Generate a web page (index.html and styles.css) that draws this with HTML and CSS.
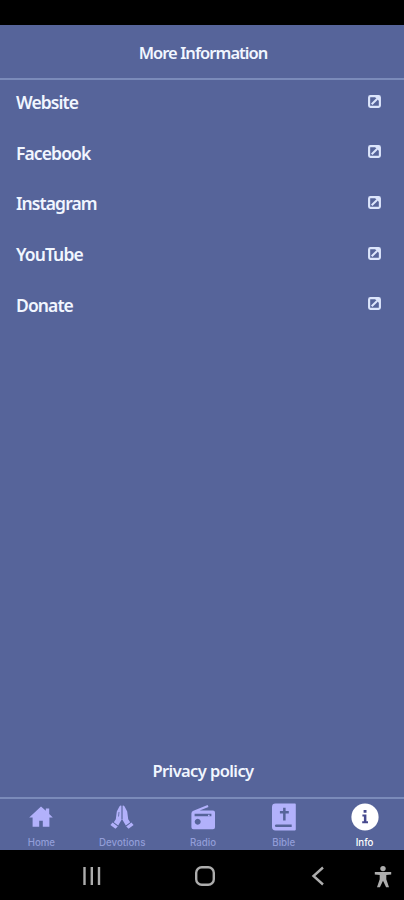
FILE: index.html
```
<!DOCTYPE html>
<html lang="en">
<head>
    <meta charset="utf-8">
    <meta name="viewport" content="width=device-width, initial-scale=1">
    <title>More Information</title>
    <link rel="stylesheet" href="styles.css">
</head>
<body>
    <svg class="sprite">
        <symbol id="open" viewBox="0 0 14 14">
            <rect x="1.2" y="1.2" width="11.6" height="11.6" rx="1.4" fill="none" stroke="currentColor" stroke-width="2.3"/>
            <path d="M7 1.5h5.5V7z" fill="currentColor"/>
            <path d="M4 10l6-6" stroke="currentColor" stroke-width="2.2"/>
        </symbol>
    </svg>

    <div class="status-bar"></div>
    <header class="header">
        <h1>More Information</h1>
    </header>

    <main class="content">
        <a class="row" href="#"><span>Website</span><svg class="open"><use href="#open"/></svg></a>
        <a class="row" href="#"><span>Facebook</span><svg class="open"><use href="#open"/></svg></a>
        <a class="row" href="#"><span>Instagram</span><svg class="open"><use href="#open"/></svg></a>
        <a class="row" href="#"><span>YouTube</span><svg class="open"><use href="#open"/></svg></a>
        <a class="row" href="#"><span>Donate</span><svg class="open"><use href="#open"/></svg></a>
        <a class="privacy" href="#">Privacy policy</a>
    </main>

    <nav class="tabs">
        <a class="tab" href="#">
            <svg viewBox="0 0 28 28">
                <path d="M14 3.4L2.2 14.4h3.4v9.4h6.6v-6h3.6v6h6.6v-9.4h3.4L22.2 11V5.4h-3.4v2.4z"/>
            </svg>
            <span>Home</span>
        </a>
        <a class="tab" href="#">
            <svg viewBox="0 0 28 28">
                <path d="M13.7 3v13.6L10.2 22.6 5.8 19.2l2-3 1-7.6 2.6-5q1.2-1.6 2.3-.6z"/>
                <path d="M14.3 3v13.6l3.5 6 4.4-3.4-2-3-1-7.6-2.6-5q-1.2-1.6-2.3-.6z"/>
                <path d="M4.6 19.4l5.2 4.2-2.4 2.2-5-3.9zM23.4 19.4l-5.2 4.2 2.4 2.2 5-3.9z"/>
                <path class="crease" d="M14 3v13M11 9l-.5 4.500"/>
            </svg>
            <span>Devotions</span>
        </a>
        <a class="tab" href="#">
            <svg viewBox="0 0 28 28">
                <path fill-rule="evenodd" d="M2.4 10.4q0-2 2-2.700L18.600 1.900l.9 2-8.800 3.500H24q2 0 2 2v14.800q0 2-2 2H4.400q-2 0-2-2zM5.600 10.800v2.400h16.800v-2.400zM8.700 15.800a3 3 0 1 0 .01 0z"/>
                <path d="M19 11.800h1.600v1.500H19z"/>
            </svg>
            <span>Radio</span>
        </a>
        <a class="tab" href="#">
            <svg viewBox="0 0 28 28">
                <path fill-rule="evenodd" d="M5.500.6H25q.8 0 .8.800v25.200q0 .8-.8.800H5.500Q2 27.400 2 24V4Q2 .6 5.500.6zM13.100 4.800v3.300H9.900v2.400h3.200v7h2.500v-7h3.200V8.100h-3.200V4.800zM6.300 21.400q-1.400 0-1.400 1.300t1.400 1.300h15.400v-2.600z"/>
            </svg>
            <span>Bible</span>
        </a>
        <a class="tab active" href="#">
            <svg viewBox="0 0 28 28">
                <circle cx="14" cy="14" r="13.6"/>
                <path class="mark" d="M12.6 7.1h2.9v2.7h-2.9zM11.4 11.6h4v6.7H17v2h-5.8v-2h1.7v-4.7h-1.5z"/>
            </svg>
            <span>Info</span>
        </a>
    </nav>

    <!-- Android navigation bar -->
    <div class="system-bar">
        <svg class="recents" viewBox="0 0 20 20"><path d="M2.5 1v18M9.8 1v18M17 1v18"/></svg>
        <svg class="home" viewBox="0 0 20 20"><rect x="1.2" y="1.2" width="17.6" height="17.6" rx="5.6"/></svg>
        <svg class="back" viewBox="0 0 20 20"><path d="M15 1.5L5.5 10l9.5 8.5"/></svg>
        <svg class="access" viewBox="0 0 20 24">
            <circle cx="10" cy="4.6" r="2.7"/>
            <path d="M1.8 8h16.4v2.5l-4.9.6v4.2l2.700 8h-2.900L10 16.700l-3.100 6.600H4l2.700-8v-4.200l-4.900-.6z"/>
        </svg>
    </div>
</body>
</html>
```

FILE: styles.css
```
:root {
    --bg-color: #56649a;
    --text-color: #f1f6ff;
    --icon-color: #dce5fb;
    --line-color: #7b8bba;
    --tab-color: #b2b1fb;
    --tab-label: #929dd8;
    --system-icon: #adadad;
}

body {
    display: flex;
    flex-direction: column;
    height: 900px;
    margin: 0;
    background: var(--bg-color);
    color: var(--text-color);
    font-family: "Noto Sans", sans-serif;
    font-weight: 600;
}

a {
    color: inherit;
    text-decoration: none;
}

.sprite {
    display: none;
}

.status-bar {
    height: 25px;
    background: #000;
}

.header {
    display: flex;
    align-items: center;
    justify-content: center;
    box-sizing: border-box;
    height: 55px;
    padding: 1px 0 0 2px;
    border-bottom: 2px solid var(--line-color);
}

.header h1 {
    margin: 0;
    font-size: 16.5px;
    font-weight: 600;
    letter-spacing: -0.95px;
}

.content {
    flex: 1;
    display: flex;
    flex-direction: column;
}

.row {
    display: flex;
    align-items: center;
    justify-content: space-between;
    height: 44px;
    margin-bottom: 6.7px;
    padding: 0 23px 0 16px;
    font-size: 17.5px;
    letter-spacing: -0.9px;
}

.open {
    width: 13px;
    height: 13px;
    margin-top: -2px;
    color: var(--icon-color);
}

.privacy {
    margin: auto auto 14px;
    padding-left: 2px;
    font-size: 16.5px;
    line-height: 24px;
    letter-spacing: -0.6px;
}

.tabs {
    display: flex;
    box-sizing: border-box;
    height: 53px;
    border-top: 2px solid var(--line-color);
}

.tab {
    flex: 1;
    display: flex;
    flex-direction: column;
    align-items: center;
    padding: 4px 0 0 2px;
    color: var(--tab-label);
    font-family: Inter, sans-serif;
    font-size: 9.7px;
    font-weight: 500;
    line-height: 12px;
}

.tab svg {
    width: 28px;
    height: 28px;
    margin-bottom: 6px;
    fill: var(--tab-color);
}

.tab .crease {
    fill: none;
    stroke: var(--bg-color);
    stroke-width: 0.8;
}

.tab.active {
    color: #fff;
}

.tab.active svg {
    fill: #fff;
}

.tab.active .mark {
    fill: #46498e;
}

.system-bar {
    display: flex;
    align-items: center;
    height: 50px;
    padding-top: 2px;
    box-sizing: border-box;
    background: #000;
}

.system-bar svg {
    width: 20px;
    height: 20px;
    fill: none;
    stroke: var(--system-icon);
    stroke-width: 2.4;
}

.system-bar .recents {
    margin-left: 82px;
}

.system-bar .home {
    margin-left: 93px;
}

.system-bar .back {
    margin-left: 93px;
}

.system-bar .access {
    height: 24px;
    margin-left: 45px;
    fill: var(--system-icon);
    stroke: none;
}
```
